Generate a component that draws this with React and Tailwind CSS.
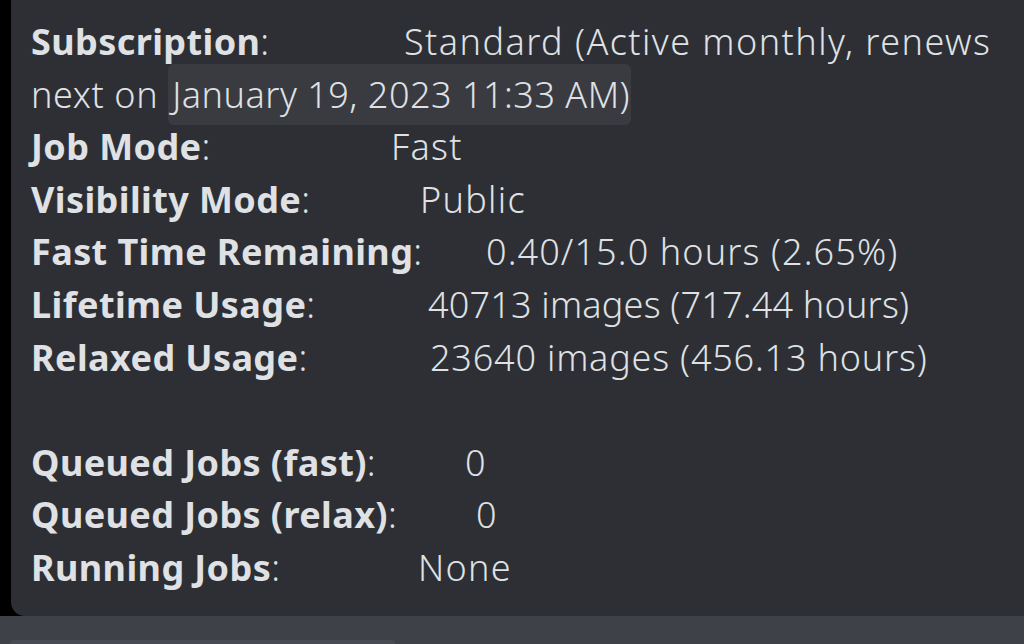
import React from 'react';

const rows = [
  { label: 'Job Mode', value: 'Fast', w: 'w-[360px]', t: 'tracking-[1.3px]' },
  { label: 'Visibility Mode', value: 'Public', w: 'w-[389px]', t: 'tracking-[1.3px]' },
  { label: 'Fast Time Remaining', value: '0.40/15.0 hours (2.65%)', w: 'w-[455px]', t: 'tracking-[1.1px]' },
  { label: 'Lifetime Usage', value: '40713 images (717.44 hours)', w: 'w-[397px]', t: 'tracking-[0.2px]' },
  { label: 'Relaxed Usage', value: '23640 images (456.13 hours)', w: 'w-[399px]', t: 'tracking-[0.8px]' },
];

const queue = [
  { label: 'Queued Jobs (fast)', value: '0', w: 'w-[434px]', t: 'tracking-[1.3px]' },
  { label: 'Queued Jobs (relax)', value: '0', w: 'w-[445px]', t: 'tracking-[1.3px]' },
  { label: 'Running Jobs', value: 'None', w: 'w-[387px]', t: 'tracking-[1.3px]' },
];

const Row = ({ label, value, w, t }) => (
  <div className="whitespace-nowrap flex">
    <span className={`inline-block ${w}`}>
      <span className="font-bold tracking-[0.4px]">{label}</span>
      <span className="font-light">:</span>
    </span>
    <span className={`font-light ${t}`}>{value}</span>
  </div>
);

const App = () => {
  return (
    <div
      className="w-[1024px] h-[644px] overflow-hidden bg-[#3e4148] flex flex-col"
      style={{ fontFamily: '"Noto Sans", "Open Sans", sans-serif' }}
    >
      {/* Info message */}
      <div className="bg-black h-[616px] flex-shrink-0">
        <div className="ml-[11px] h-full bg-[#2e2f34] rounded-bl-[14px] pl-[20px] pt-[16px] text-[36px] leading-[52.6px] text-[#dfe1e4]">
          <Row label="Subscription" value="Standard (Active monthly, renews" w="w-[373px]" t="tracking-[1.45px]" />
          <div className="whitespace-nowrap font-light">
            <span className="tracking-[0.6px]">next on</span>
            <span className="ml-[10px] bg-[#3a3b41] rounded-[6px] pl-[4px] pr-[1px] py-[6px] tracking-[0.5px]">
              January 19, 2023 11:33 AM)
            </span>
          </div>
          {rows.map((r) => (
            <Row key={r.label} {...r} />
          ))}
          <div className="h-[52.6px]" />
          {queue.map((r) => (
            <Row key={r.label} {...r} />
          ))}
        </div>
      </div>

      {/* Composer area */}
      <div className="flex-1 pt-[24px] pl-[10px]">
        <div className="w-[385px] h-full bg-[#484b53] rounded-t-[10px]" />
      </div>
    </div>
  );
};

export default App;
